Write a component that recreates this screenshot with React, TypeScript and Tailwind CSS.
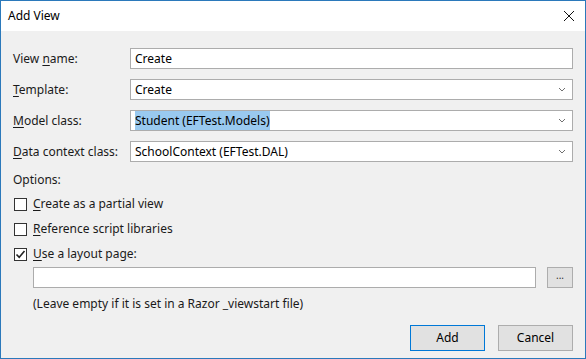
import { ReactNode } from 'react';

const font = { fontFamily: '"Noto Sans", "Open Sans", Arial, sans-serif' };

function U({ c }: { c: string }) {
  return <span className="underline underline-offset-2">{c}</span>;
}

function Chevron() {
  return (
    <svg width="8" height="5" viewBox="0 0 8 5" className="shrink-0">
      <path d="M1 1 L4 4 L7 1" fill="none" stroke="#707070" strokeWidth="1" />
    </svg>
  );
}

type RowProps = { label: ReactNode; children: ReactNode; combo?: boolean };

function FieldRow({ label, children, combo }: RowProps) {
  return (
    <div className="flex h-[21px] items-center">
      <div className="w-[117px] text-[12px] text-[#1a1a1a]">{label}</div>
      <div className="flex h-[21px] flex-1 items-center border border-[#acacac] bg-white pr-[6px] pl-[4px] text-[12px] text-black">
        <div className="flex-1">{children}</div>
        {combo && <Chevron />}
      </div>
    </div>
  );
}

function Check({ checked, children }: { checked?: boolean; children: ReactNode }) {
  return (
    <div className="flex h-[16px] items-center gap-[6px] text-[12px] text-[#1a1a1a]">
      <div className="flex h-[13px] w-[13px] items-center justify-center border border-[#333] bg-white">
        {checked && (
          <svg width="11" height="11" viewBox="0 0 11 11">
            <path d="M1.5 5.5 L4.2 8.3 L9.5 2" fill="none" stroke="#222" strokeWidth="1.6" />
          </svg>
        )}
      </div>
      <span>{children}</span>
    </div>
  );
}

export default function App() {
  return (
    <div className="h-[359px] w-[586px] border border-[#2b79bb] bg-[#f0f0f0]" style={font}>
      {/* title bar */}
      <div className="flex h-[30px] items-center justify-between bg-white pr-[10px] pl-[7px]">
        <span className="text-[12px] text-black">Add View</span>
        <svg width="12" height="12" viewBox="0 0 12 12">
          <path d="M1 1 L11 11 M11 1 L1 11" stroke="#111" strokeWidth="1" />
        </svg>
      </div>

      <div className="flex flex-col pt-[17px] pr-[12px] pl-[12px]">
        <div className="flex flex-col gap-[10px]">
          <FieldRow label={<>View <U c="n" />ame:</>}>Create</FieldRow>
          <FieldRow label={<><U c="T" />emplate:</>} combo>
            Create
          </FieldRow>
          <FieldRow label={<><U c="M" />odel class:</>} combo>
            <span className="bg-[#99c9ef] py-[1px]">Student (EFTest.Models)</span>
          </FieldRow>
          <FieldRow label={<><U c="D" />ata context class:</>} combo>
            SchoolContext (EFTest.DAL)
          </FieldRow>
        </div>

        <div className="mt-[9px] text-[12px] text-[#1a1a1a]">Options:</div>

        <div className="mt-[7px] ml-[1px] flex flex-col gap-[9px]">
          <Check>
            <U c="C" />reate as a partial view
          </Check>
          <Check>
            <U c="R" />eference script libraries
          </Check>
          <Check checked>
            <U c="U" />se a layout page:
          </Check>
        </div>

        <div className="mt-[5px] flex items-center gap-[11px] pl-[20px]">
          <div className="h-[21px] flex-1 border border-[#acacac] bg-white" />
          <button className="flex h-[21px] w-[26px] items-center justify-center border border-[#adadad] bg-[#e1e1e1] pb-[4px] text-[10px] text-[#333]">
            ...
          </button>
        </div>

        <div className="mt-[7px] pl-[20px] text-[12px] text-[#1a1a1a]">
          (Leave empty if it is set in a Razor _viewstart file)
        </div>

        <div className="mt-[12px] flex justify-end gap-[13px]">
          <button className="h-[26px] w-[75px] border border-[#0078d7] bg-[#e1e1e1] text-[12px] text-black">
            Add
          </button>
          <button className="h-[26px] w-[75px] border border-[#adadad] bg-[#e1e1e1] text-[12px] text-black">
            Cancel
          </button>
        </div>
      </div>
    </div>
  );
}
